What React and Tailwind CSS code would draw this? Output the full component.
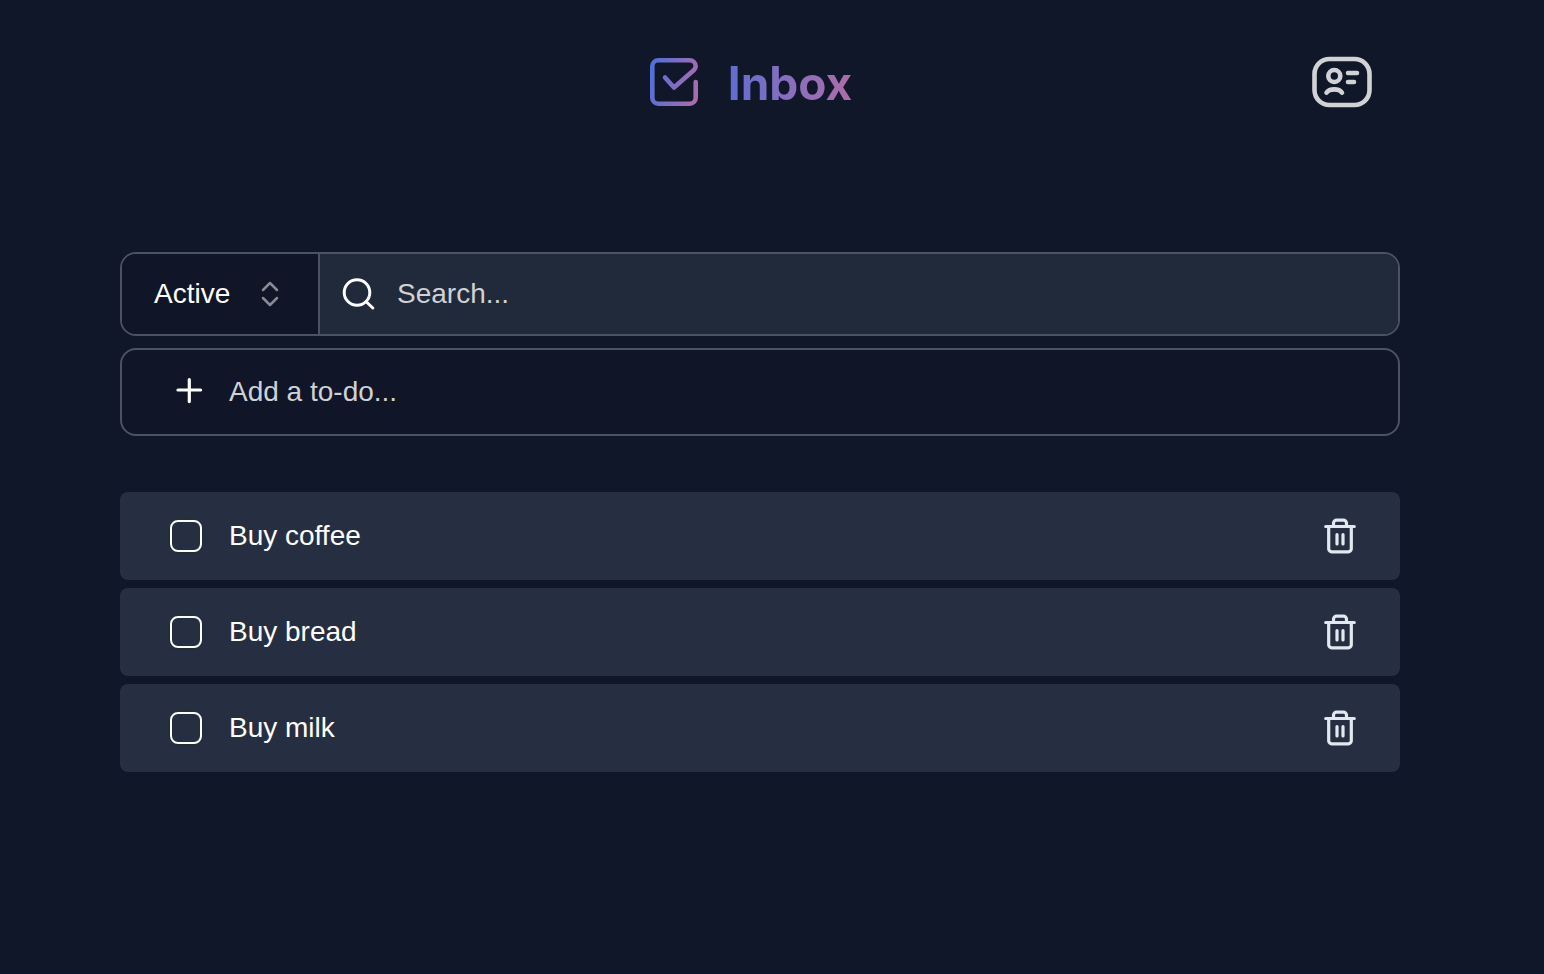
import { useState } from "react";

function LogoIcon() {
  return (
    <svg className="h-12 w-12" viewBox="0 0 48 48" fill="none" stroke="url(#brand)" strokeWidth="4.600" strokeLinecap="round" strokeLinejoin="round" aria-hidden="true">
      <defs>
        <linearGradient id="brand" gradientUnits="userSpaceOnUse" x1="0" y1="0" x2="56" y2="14">
          <stop offset="0" stopColor="#4b6fdc" />
          <stop offset="1" stopColor="#b06ca9" />
        </linearGradient>
      </defs>
      <path d="M45.700 24v15.700a6 6 0 0 1-6 6H8.300a6 6 0 0 1-6-6V8.300a6 6 0 0 1 6-6h31.400a6 6 0 0 1 6 6q0 2-2 4L24 29.500 15 19.500" />
    </svg>
  );
}

function ProfileIcon() {
  return (
    <svg className="h-[52px] w-15" viewBox="0 0 60 52" fill="none" stroke="#d1d2d6" strokeWidth="4.600" strokeLinecap="round" aria-hidden="true">
      <rect x="2.500" y="3" width="55" height="46" rx="15" />
      <circle cx="22.300" cy="20" r="6" />
      <path d="M14.500 36.700c3-4.500 12.500-4.500 15.500 0M36 17h9M36 26h6" />
    </svg>
  );
}

function TrashIcon() {
  return (
    <svg className="h-9 w-8" viewBox="0 0 32 36" fill="none" stroke="#e2e8f0" strokeWidth="3.200" strokeLinecap="round" strokeLinejoin="round" aria-hidden="true">
      <path d="M1.700 8.500h28.600M4.700 8.500v22.300a3 3 0 0 0 3 3h16.600a3 3 0 0 0 3-3V8.500M9.500 8V5.200a3 3 0 0 1 3-3h7a3 3 0 0 1 3 3V8M13 16.500v9.500M19 16.500v9.500" />
    </svg>
  );
}

const initialTodos = ["Buy coffee", "Buy bread", "Buy milk"];

export default function App() {
  const [todos, setTodos] = useState(initialTodos);
  return (
    <div className="min-h-screen bg-[#101728] pt-12 pr-36 pb-12 pl-30 font-['Liberation_Sans',Arial,sans-serif] text-[28px] leading-10 text-white">
      <header className="grid grid-cols-[1fr_auto_1fr] items-center">
        <div />
        <div className="flex items-center gap-[30px] pr-[18px]">
          <LogoIcon />
          <h1 className="bg-linear-to-r from-[#5f6dd0] to-[#ac6ca9] bg-clip-text pt-0.5 font-[Inter,sans-serif] text-[46px] leading-[66px] font-bold text-transparent">Inbox</h1>
        </div>
        <button type="button" aria-label="Profile" className="mr-7 justify-self-end"><ProfileIcon /></button>
      </header>

      <main className="mt-34">
        <div className="flex h-21 overflow-hidden rounded-2xl border-2 border-[#4b5260]">
          <button type="button" className="flex w-[198px] shrink-0 items-center justify-between border-r-2 border-[#4b5260] bg-[#101627] pr-[38px] pl-8">
            Active
            <svg className="h-7 w-5" viewBox="0 0 20 28" fill="none" stroke="#888b93" strokeWidth="2.500" strokeLinecap="round" strokeLinejoin="round" aria-hidden="true">
              <path d="M3 10l7-7 7 7M3 18l7 7 7-7" />
            </svg>
          </button>
          <label className="flex flex-1 items-center gap-[19px] bg-[#212a3a] pl-[22px]">
            <svg className="h-8 w-9" viewBox="0 0 36 32" fill="none" stroke="white" strokeWidth="3" strokeLinecap="round" aria-hidden="true">
              <circle cx="15" cy="14.500" r="12.800" />
              <path d="M24.500 24l6.300 6" />
            </svg>
            <input type="search" aria-label="Search" placeholder="Search..." className="min-w-0 flex-1 bg-transparent outline-none placeholder:text-[#cfd1d5]" />
          </label>
        </div>

        <label className="mt-3 flex h-22 items-center gap-[26px] rounded-2xl border-2 border-[#4b5260] bg-[#101627] pl-[53px]">
          <svg className="h-7 w-7" viewBox="0 0 28 28" fill="none" stroke="white" strokeWidth="3.200" strokeLinecap="round" aria-hidden="true">
            <path d="M14.300 1.600v22M3 12h22.600" />
          </svg>
          <input type="text" aria-label="Add a to-do" placeholder="Add a to-do..." className="min-w-0 flex-1 bg-transparent outline-none placeholder:text-[#cfd1d5]" />
        </label>

        <ul className="mt-14 flex flex-col gap-2">
          {todos.map((todo) => (
            <li key={todo} className="flex h-22 items-center justify-between rounded-lg bg-[#262f41] pr-11 pl-[50px]">
              <label className="flex items-center gap-[27px]">
                <input type="checkbox" className="h-8 w-8 appearance-none rounded-lg border-2 border-white shadow-sm checked:bg-[#5f6dd0]" />
                {todo}
              </label>
              <button type="button" aria-label={"Delete " + todo} onClick={() => setTodos(todos.filter((item) => item !== todo))}>
                <TrashIcon />
              </button>
            </li>
          ))}
        </ul>
      </main>
    </div>
  );
}
